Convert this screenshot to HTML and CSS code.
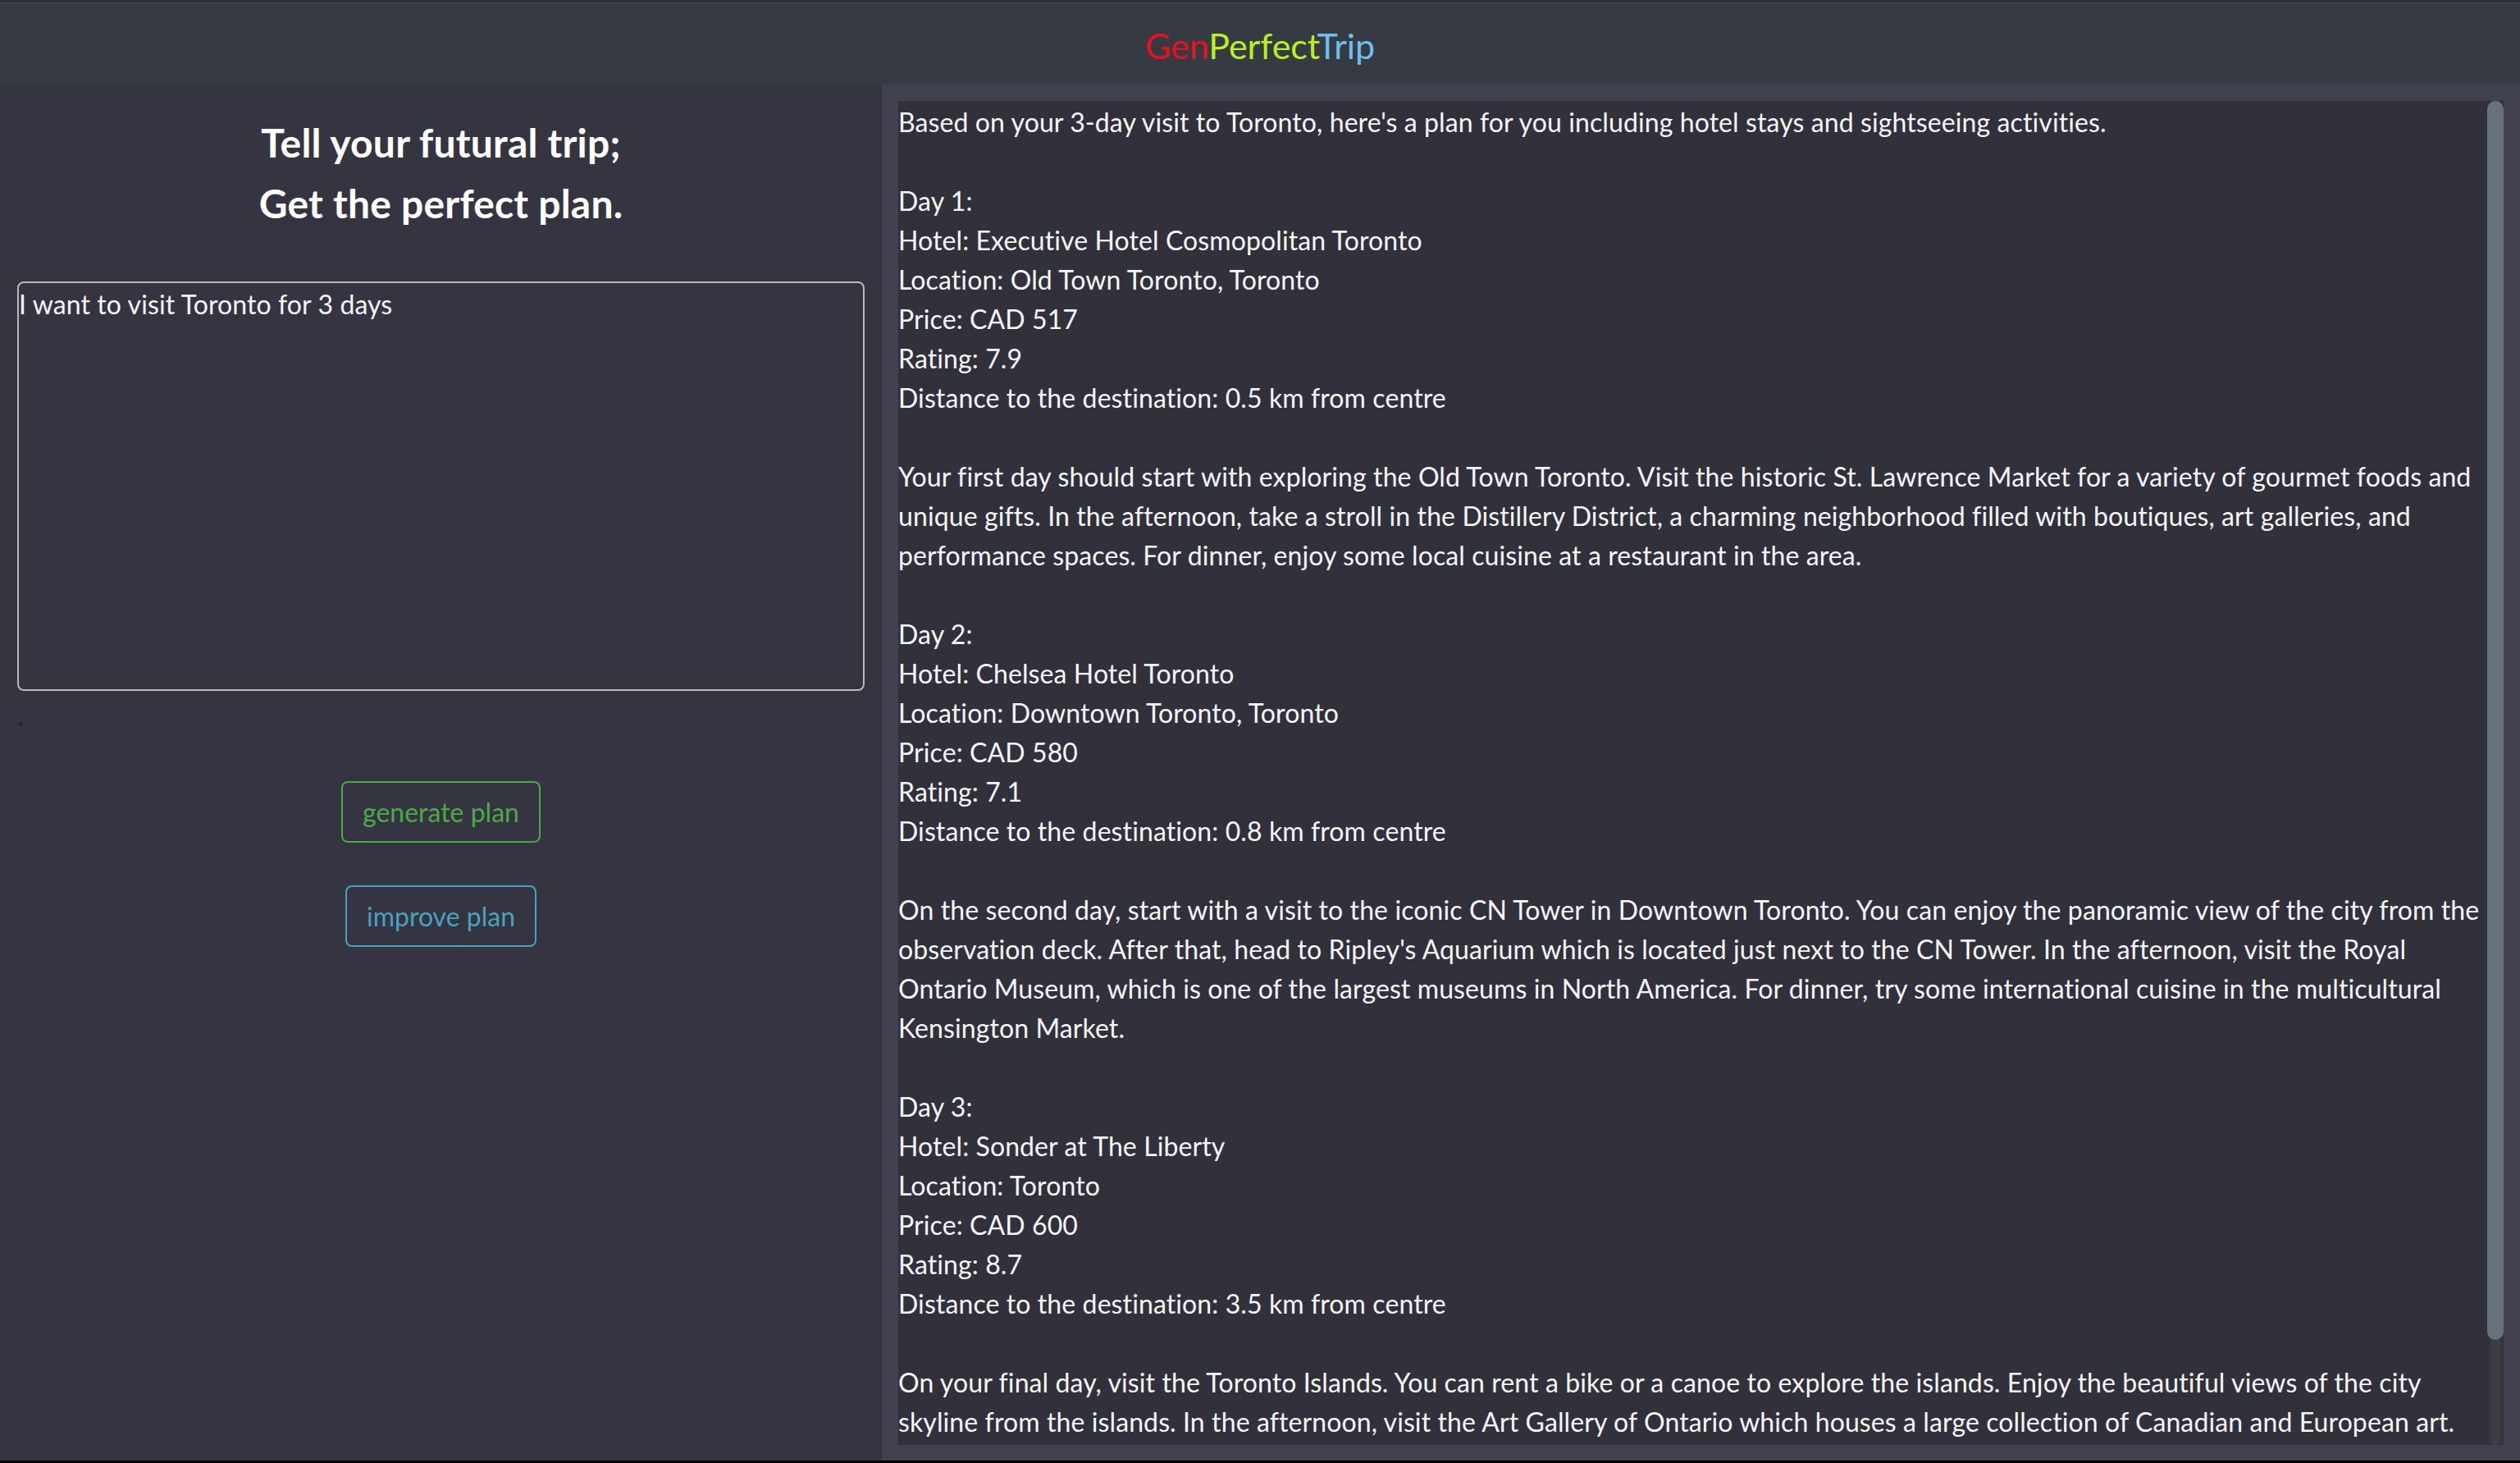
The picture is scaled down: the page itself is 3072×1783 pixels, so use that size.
FILE: index.html
```html
<!DOCTYPE html>
<html lang="en">
<head>
<meta charset="utf-8">
<title>GenPerfectTrip</title>
<link rel="stylesheet" href="styles.css">
</head>
<body>
<header class="topbar">
  <h1 class="brand"><span class="brand-gen">Gen</span><span class="brand-perfect">Perfect</span><span class="brand-trip">Trip</span></h1>
</header>
<main class="layout">
  <section class="input-panel">
    <h2 class="tagline">Tell your futural trip;<br>Get the perfect plan.</h2>
    <textarea class="prompt">I want to visit Toronto for 3 days</textarea>
    <div class="status-dot"></div>
    <div class="actions">
      <button class="btn btn-generate" type="button">generate plan</button>
      <button class="btn btn-improve" type="button">improve plan</button>
    </div>
  </section>
  <section class="output-panel">
    <div class="plan-frame">
      <div class="plan">Based on your 3-day visit to Toronto, here's a plan for you including hotel stays and sightseeing activities.

Day 1:
Hotel: Executive Hotel Cosmopolitan Toronto
Location: Old Town Toronto, Toronto
Price: CAD 517
Rating: 7.9
Distance to the destination: 0.5 km from centre

Your first day should start with exploring the Old Town Toronto. Visit the historic St. Lawrence Market for a variety of gourmet foods and
unique gifts. In the afternoon, take a stroll in the Distillery District, a charming neighborhood filled with boutiques, art galleries, and
performance spaces. For dinner, enjoy some local cuisine at a restaurant in the area.

Day 2:
Hotel: Chelsea Hotel Toronto
Location: Downtown Toronto, Toronto
Price: CAD 580
Rating: 7.1
Distance to the destination: 0.8 km from centre

On the second day, start with a visit to the iconic CN Tower in Downtown Toronto. You can enjoy the panoramic view of the city from the
observation deck. After that, head to Ripley's Aquarium which is located just next to the CN Tower. In the afternoon, visit the Royal
Ontario Museum, which is one of the largest museums in North America. For dinner, try some international cuisine in the multicultural
Kensington Market.

Day 3:
Hotel: Sonder at The Liberty
Location: Toronto
Price: CAD 600
Rating: 8.7
Distance to the destination: 3.5 km from centre

On your final day, visit the Toronto Islands. You can rent a bike or a canoe to explore the islands. Enjoy the beautiful views of the city
skyline from the islands. In the afternoon, visit the Art Gallery of Ontario which houses a large collection of Canadian and European art.</div>
      <div class="scrollbar" aria-hidden="true">
        <div class="scrollbar-thumb"></div>
      </div>
    </div>
  </section>
</main>
</body>
</html>
```

FILE: styles.css
```css
* { box-sizing: border-box; }

html, body {
  margin: 0;
  padding: 0;
}

body {
  background: #000;
  color: #f4f4f6;
  font-family: Lato, "Noto Sans", sans-serif;
  font-size: 32px;
  line-height: 48px;
  height: 1783px;
  overflow: hidden;
}

.topbar {
  height: 103px;
  background: linear-gradient(#2c2e36 0, #2c2e36 3px, #553a55 3px, #553a55 4px, #363a43 4px);
  display: flex;
  align-items: center;
  justify-content: center;
  padding-top: 8px;
}

.brand {
  margin: 0;
  font-size: 43px;
  font-weight: 400;
  line-height: 52px;
}

.brand-gen { color: #e8101e; }
.brand-perfect { color: #b8f020; }
.brand-trip { color: #6cc0ec; }

.layout {
  display: grid;
  grid-template-columns: 1075px 1fr;
  height: 1677px;
}

.input-panel {
  background: #353541;
  padding: 34px 21px 0;
  display: flex;
  flex-direction: column;
}

.tagline {
  margin: 0 0 58px;
  text-align: center;
  font-size: 48px;
  font-weight: 700;
  line-height: 74px;
  letter-spacing: 0.2px;
  color: #ffffff;
}

.prompt {
  display: block;
  width: 100%;
  height: 499px;
  margin: 0;
  padding: 2px 0 0;
  background: #353541;
  color: #f4f4f6;
  border: 2px solid #b9b9bc;
  border-radius: 8px;
  font-family: inherit;
  font-size: 32px;
  line-height: 48px;
  letter-spacing: 0.1px;
  resize: none;
  outline: none;
}

.status-dot {
  width: 4px;
  height: 4px;
  margin: 38px 0 0 2px;
  background: #24242c;
}

.actions {
  margin-top: 68px;
  display: flex;
  flex-direction: column;
  align-items: center;
  gap: 52px;
}

.btn {
  font-family: inherit;
  font-size: 32px;
  line-height: 47px;
  padding: 12px 24px;
  background: transparent;
  border: 2px solid;
  border-radius: 8px;
  cursor: pointer;
}

.btn-generate {
  color: #4caa46;
  border-color: #4caa46;
}

.btn-improve {
  color: #46a2c0;
  border-color: #46a2c0;
}

.output-panel {
  background: #42414f;
  padding: 20px 20px 19px;
  min-height: 0;
}

.plan-frame {
  height: 100%;
  display: flex;
  background: #31313b;
}

.plan {
  flex: 1;
  min-width: 0;
  overflow: hidden;
  white-space: pre-wrap;
  padding: 2px 0 0;
  letter-spacing: 0.1px;
  color: #f6f6f8;
}

.scrollbar {
  width: 20px;
  flex: none;
  background: linear-gradient(90deg, #2f2f36, #3d3d45 30%, #3d3d45 70%, #2f2f36);
  border-radius: 10px;
}

.scrollbar-thumb {
  height: 1510px;
  background: #68727c;
  border-radius: 10px;
}
```
